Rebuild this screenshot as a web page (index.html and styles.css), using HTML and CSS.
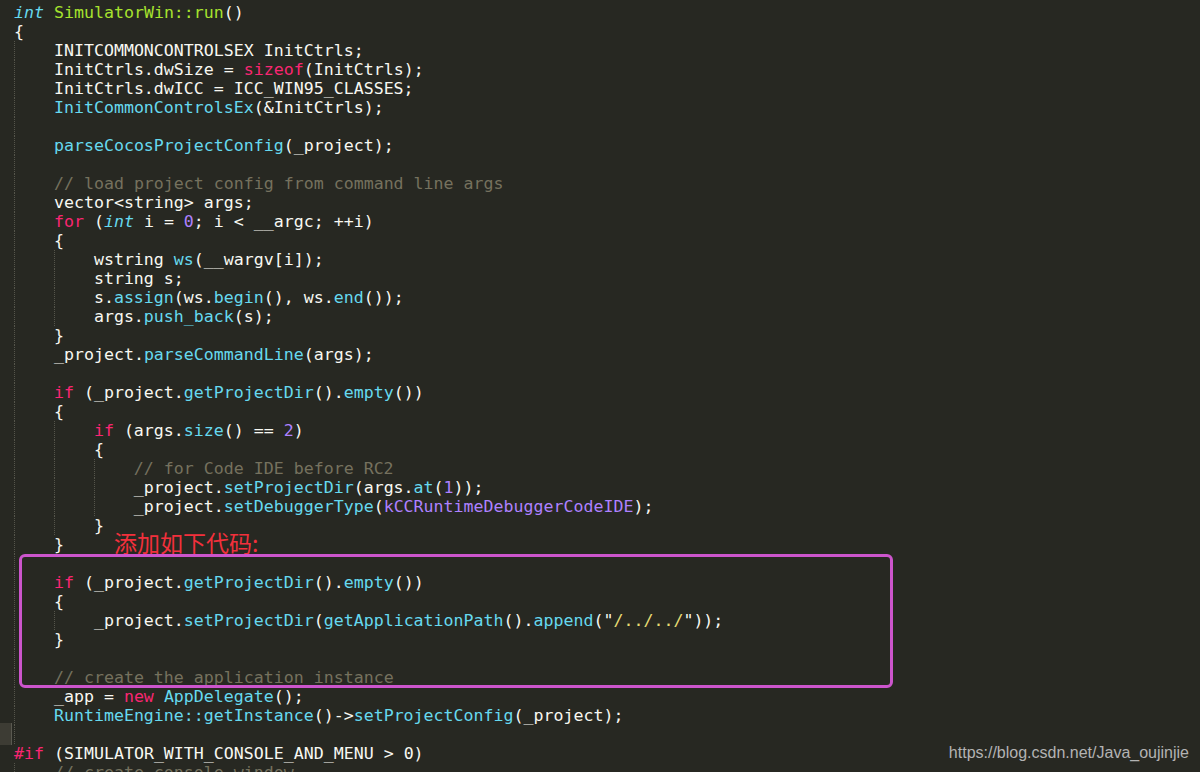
FILE: index.html
```html
<!DOCTYPE html>
<html>
<head>
    <meta charset="utf-8">
    <title>SimulatorWin::run</title>
    <link rel="stylesheet" href="styles.css">
</head>
<body>
    <main class="editor">
        <div class="code">
            <div class="ln"><span class="t">int</span> <span class="e">SimulatorWin::run</span>()</div>
            <div class="ln">{</div>
            <div class="ln"><i class="g"></i>INITCOMMONCONTROLSEX InitCtrls;</div>
            <div class="ln"><i class="g"></i>InitCtrls.dwSize = <span class="k">sizeof</span>(InitCtrls);</div>
            <div class="ln"><i class="g"></i>InitCtrls.dwICC = ICC_WIN95_CLASSES;</div>
            <div class="ln"><i class="g"></i><span class="f">InitCommonControlsEx</span>(&amp;InitCtrls);</div>
            <div class="ln"><i class="g"></i></div>
            <div class="ln"><i class="g"></i><span class="f">parseCocosProjectConfig</span>(_project);</div>
            <div class="ln"><i class="g"></i></div>
            <div class="ln"><i class="g"></i><span class="c">// load project config from command line args</span></div>
            <div class="ln"><i class="g"></i>vector&lt;string&gt; args;</div>
            <div class="ln"><i class="g"></i><span class="k">for</span> (<span class="t">int</span> i = <span class="n">0</span>; i &lt; __argc; ++i)</div>
            <div class="ln"><i class="g"></i>{</div>
            <div class="ln"><i class="g"></i><i class="g"></i>wstring <span class="f">ws</span>(__wargv[i]);</div>
            <div class="ln"><i class="g"></i><i class="g"></i>string s;</div>
            <div class="ln"><i class="g"></i><i class="g"></i>s.<span class="f">assign</span>(ws.<span class="f">begin</span>(), ws.<span class="f">end</span>());</div>
            <div class="ln"><i class="g"></i><i class="g"></i>args.<span class="f">push_back</span>(s);</div>
            <div class="ln"><i class="g"></i>}</div>
            <div class="ln"><i class="g"></i>_project.<span class="f">parseCommandLine</span>(args);</div>
            <div class="ln"><i class="g"></i></div>
            <div class="ln"><i class="g"></i><span class="k">if</span> (_project.<span class="f">getProjectDir</span>().<span class="f">empty</span>())</div>
            <div class="ln"><i class="g"></i>{</div>
            <div class="ln"><i class="g"></i><i class="g"></i><span class="k">if</span> (args.<span class="f">size</span>() == <span class="n">2</span>)</div>
            <div class="ln"><i class="g"></i><i class="g"></i>{</div>
            <div class="ln"><i class="g"></i><i class="g"></i><i class="g"></i><span class="c">// for Code IDE before RC2</span></div>
            <div class="ln"><i class="g"></i><i class="g"></i><i class="g"></i>_project.<span class="f">setProjectDir</span>(args.<span class="f">at</span>(<span class="n">1</span>));</div>
            <div class="ln"><i class="g"></i><i class="g"></i><i class="g"></i>_project.<span class="f">setDebuggerType</span>(<span class="n">kCCRuntimeDebuggerCodeIDE</span>);</div>
            <div class="ln"><i class="g"></i><i class="g"></i>}</div>
            <div class="ln"><i class="g"></i>}</div>
            <div class="ln"><i class="g"></i></div>
            <div class="ln"><i class="g"></i><span class="k">if</span> (_project.<span class="f">getProjectDir</span>().<span class="f">empty</span>())</div>
            <div class="ln"><i class="g"></i>{</div>
            <div class="ln"><i class="g"></i><i class="g"></i>_project.<span class="f">setProjectDir</span>(<span class="f">getApplicationPath</span>().<span class="f">append</span>("<span class="s">/../../</span>"));</div>
            <div class="ln"><i class="g"></i>}</div>
            <div class="ln"><i class="g"></i></div>
            <div class="ln"><i class="g"></i><span class="c">// create the application instance</span></div>
            <div class="ln"><i class="g"></i>_app = <span class="k">new</span> <span class="f">AppDelegate</span>();</div>
            <div class="ln"><i class="g"></i><span class="f">RuntimeEngine::getInstance</span>()-&gt;<span class="f">setProjectConfig</span>(_project);</div>
            <div class="ln cur"><i class="g"></i></div>
            <div class="ln"><span class="k">#if</span> (SIMULATOR_WITH_CONSOLE_AND_MENU &gt; 0)</div>
            <div class="ln"><i class="g"></i><span class="c">// create console window</span></div>
        </div>

        <!-- annotation drawn over the screenshot -->
        <div class="note">添加如下代码:</div>
        <div class="mark"></div>
        <div class="watermark">https://blog.csdn.net/Java_oujinjie</div>
    </main>
</body>
</html>
```

FILE: styles.css
```css
/* Base page */
body {
    margin: 0;
    background: #272822;
    height: 772px;
    overflow: hidden;
}

.editor {
    position: relative;
    height: 772px;
}

/* Code lines */
.code {
    padding: 3px 0 0 14px;
    font-family: "DejaVu Sans Mono", "Liberation Mono", monospace;
    font-size: 16.6px;
    line-height: 19px;
    color: #f8f8f2;
}

.ln {
    position: relative;
    height: 19px;
    white-space: pre;
}

/* indent guide, one per level */
.g {
    display: inline-block;
    box-sizing: border-box;
    width: 4ch;
    height: 19px;
    vertical-align: top;
    border-left: 1px dotted #55554b;
}

/* caret line marker in the gutter */
.cur::before {
    content: '';
    position: absolute;
    left: -14px;
    top: -2px;
    width: 11px;
    height: 22px;
    background: #3d3c34;
    border-right: 1px solid #5a5950;
}

/* Monokai tokens */
.k { color: #f92672; }
.t { color: #66d9ef; font-style: italic; }
.f { color: #66d9ef; }
.e { color: #a6e22e; }
.n { color: #ae81ff; }
.c { color: #75715e; }
.s { color: #e6db74; }

/* Annotation overlay */
.note {
    position: absolute;
    left: 114px;
    top: 531px;
    font-family: "Noto Sans CJK SC", sans-serif;
    font-size: 23px;
    line-height: 23px;
    color: #f2303c;
}

.mark {
    position: absolute;
    left: 19px;
    top: 554px;
    width: 874px;
    height: 134px;
    box-sizing: border-box;
    border: 3px solid #cc55cc;
    border-radius: 6px;
}

.watermark {
    position: absolute;
    right: 11px;
    top: 743px;
    font-family: "Liberation Sans", Arial, sans-serif;
    font-size: 16px;
    line-height: 19px;
    color: #b3b3b3;
}
```
